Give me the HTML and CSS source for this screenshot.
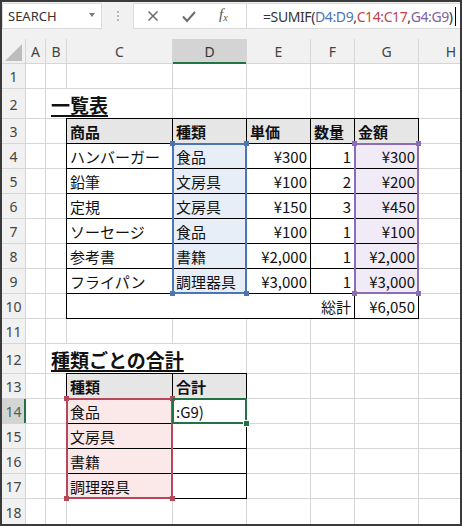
FILE: index.html
```html
<!DOCTYPE html>
<html lang="ja">
<head>
<meta charset="utf-8">
<title>SUMIF</title>
<link rel="stylesheet" href="styles.css">
</head>
<body>
<div class="frame">
  <div class="toolbar">
    <div class="namebox"><span class="nb-text">SEARCH</span><span class="nb-arrow"></span></div>
    <div class="grip"><i></i><i></i><i></i></div>
    <div class="fbar">
      <div class="fbtns">
        <svg class="ico-x" width="12" height="12" viewBox="0 0 12 12"><path d="M1.5 1.5 L10.5 10.5 M10.5 1.5 L1.5 10.5" stroke="#6b6b6b" stroke-width="1.5" fill="none"/></svg>
        <svg class="ico-ok" width="14" height="12" viewBox="0 0 14 12"><path d="M1 5.5 L5 10 L13 1" stroke="#6b6b6b" stroke-width="2" fill="none"/></svg>
        <span class="fx"><i>f</i><sub>x</sub></span>
      </div>
      <div class="ftext">=SUMIF(<span class="rb">D4:D9</span>,<span class="rr">C14:C17</span>,<span class="rp">G4:G9</span>)<span class="caret"></span></div>
    </div>
  </div>
  <div class="sheet">
    <div class="cells">
      <!-- header row -->
      <div class="h corner"><svg width="23" height="24" viewBox="0 0 23 24"><polygon points="3,22 20,22 20,5" fill="#bdbdbd"/></svg></div>
      <div class="h">A</div><div class="h">B</div><div class="h">C</div><div class="h sel">D</div><div class="h">E</div><div class="h">F</div><div class="h">G</div><div class="h">H</div>
      <!-- 1 -->
      <div class="rh">1</div><div class="c"></div><div class="c"></div><div class="c"></div><div class="c"></div><div class="c"></div><div class="c"></div><div class="c"></div><div class="c"></div>
      <!-- 2 -->
      <div class="rh">2</div><div class="c"></div><div class="c hd span2"><span>一覧表</span></div><div class="c"></div><div class="c"></div><div class="c"></div><div class="c"></div><div class="c"></div>
      <!-- 3 -->
      <div class="rh">3</div><div class="c"></div><div class="c"></div>
      <div class="c tb th">商品</div><div class="c tb th">種類</div><div class="c tb th">単価</div><div class="c tb th">数量</div><div class="c tb th">金額</div><div class="c"></div>
      <!-- 4 -->
      <div class="rh">4</div><div class="c"></div><div class="c"></div>
      <div class="c tb">ハンバーガー</div><div class="c tb fill-blue">食品</div><div class="c tb num">¥300</div><div class="c tb num">1</div><div class="c tb num fill-purple">¥300</div><div class="c"></div>
      <!-- 5 -->
      <div class="rh">5</div><div class="c"></div><div class="c"></div>
      <div class="c tb">鉛筆</div><div class="c tb fill-blue">文房具</div><div class="c tb num">¥100</div><div class="c tb num">2</div><div class="c tb num fill-purple">¥200</div><div class="c"></div>
      <!-- 6 -->
      <div class="rh">6</div><div class="c"></div><div class="c"></div>
      <div class="c tb">定規</div><div class="c tb fill-blue">文房具</div><div class="c tb num">¥150</div><div class="c tb num">3</div><div class="c tb num fill-purple">¥450</div><div class="c"></div>
      <!-- 7 -->
      <div class="rh">7</div><div class="c"></div><div class="c"></div>
      <div class="c tb">ソーセージ</div><div class="c tb fill-blue">食品</div><div class="c tb num">¥100</div><div class="c tb num">1</div><div class="c tb num fill-purple">¥100</div><div class="c"></div>
      <!-- 8 -->
      <div class="rh">8</div><div class="c"></div><div class="c"></div>
      <div class="c tb">参考書</div><div class="c tb fill-blue">書籍</div><div class="c tb num">¥2,000</div><div class="c tb num">1</div><div class="c tb num fill-purple">¥2,000</div><div class="c"></div>
      <!-- 9 -->
      <div class="rh">9</div><div class="c"></div><div class="c"></div>
      <div class="c tb">フライパン</div><div class="c tb fill-blue">調理器具</div><div class="c tb num">¥3,000</div><div class="c tb num">1</div><div class="c tb num fill-purple">¥3,000</div><div class="c"></div>
      <!-- 10 -->
      <div class="rh">10</div><div class="c"></div><div class="c"></div>
      <div class="c tb num span4">総計</div><div class="c tb num">¥6,050</div><div class="c"></div>
      <!-- 11 -->
      <div class="rh">11</div><div class="c"></div><div class="c"></div><div class="c"></div><div class="c"></div><div class="c"></div><div class="c"></div><div class="c"></div><div class="c"></div>
      <!-- 12 -->
      <div class="rh">12</div><div class="c"></div><div class="c hd span3"><span>種類ごとの合計</span></div><div class="c"></div><div class="c"></div><div class="c"></div><div class="c"></div>
      <!-- 13 -->
      <div class="rh">13</div><div class="c"></div><div class="c"></div>
      <div class="c tb th">種類</div><div class="c tb th">合計</div><div class="c"></div><div class="c"></div><div class="c"></div><div class="c"></div>
      <!-- 14 -->
      <div class="rh sel">14</div><div class="c"></div><div class="c"></div>
      <div class="c tb fill-red">食品</div><div class="c tb">:G9)</div><div class="c"></div><div class="c"></div><div class="c"></div><div class="c"></div>
      <!-- 15 -->
      <div class="rh">15</div><div class="c"></div><div class="c"></div>
      <div class="c tb fill-red">文房具</div><div class="c tb"></div><div class="c"></div><div class="c"></div><div class="c"></div><div class="c"></div>
      <!-- 16 -->
      <div class="rh">16</div><div class="c"></div><div class="c"></div>
      <div class="c tb fill-red">書籍</div><div class="c tb"></div><div class="c"></div><div class="c"></div><div class="c"></div><div class="c"></div>
      <!-- 17 -->
      <div class="rh">17</div><div class="c"></div><div class="c"></div>
      <div class="c tb fill-red">調理器具</div><div class="c tb"></div><div class="c"></div><div class="c"></div><div class="c"></div><div class="c"></div>
      <!-- 18 -->
      <div class="rh">18</div><div class="c"></div><div class="c"></div><div class="c"></div><div class="c"></div><div class="c"></div><div class="c"></div><div class="c"></div><div class="c"></div>
    </div>
    <div class="marks">
      <div class="range r-blue"><span class="hdl tl"></span><span class="hdl tr"></span><span class="hdl bl"></span><span class="hdl br"></span></div>
      <div class="range r-purple"><span class="hdl tl"></span><span class="hdl tr"></span><span class="hdl bl"></span><span class="hdl br"></span></div>
      <div class="range r-red"><span class="hdl tl"></span><span class="hdl tr"></span><span class="hdl bl"></span><span class="hdl br"></span></div>
      <div class="range active"><span class="hdl br"></span></div>
    </div>
  </div>
</div>
</body>
</html>
```

FILE: styles.css
```css
html, body {
  margin: 0;
  padding: 0;
  background: #fff;
}

.frame {
  --cols: 23px 19px 20px 105px 73px 63px 43px 63px 64px;
  --rows: 24px 24px 29px repeat(9, 24px) 29px repeat(5, 24px) 1fr;
  width: 462px;
  height: 526px;
  box-sizing: border-box;
  border: 2px solid #3a3a3a;
  background: #f1f1f1;
  display: flex;
  flex-direction: column;
  overflow: hidden;
  font-family: "Noto Sans CJK JP", "Noto Sans", sans-serif;
}

/* ---------- toolbar ---------- */
.toolbar {
  height: 37px;
  flex: none;
  box-sizing: border-box;
  padding-top: 1px;
  display: flex;
  align-items: flex-start;
}

.namebox {
  width: 100px;
  height: 26px;
  box-sizing: border-box;
  background: #fff;
  border: 1px solid #dadada;
  display: flex;
  align-items: center;
  justify-content: space-between;
  padding: 0 6px 0 5px;
}

.nb-text {
  font-family: "Noto Sans", sans-serif;
  font-size: 13px;
  color: #333;
  line-height: 1;
}

.nb-arrow {
  width: 0;
  height: 0;
  border-left: 3px solid transparent;
  border-right: 3px solid transparent;
  border-top: 4px solid #7a7a7a;
  margin-bottom: 2px;
}

.grip {
  width: 31px;
  height: 26px;
  display: flex;
  flex-direction: column;
  align-items: center;
  justify-content: center;
  gap: 2px;
}

.grip i {
  display: block;
  width: 2px;
  height: 2px;
  background: #b5b5b5;
}

.fbar {
  flex: 1;
  height: 26px;
  box-sizing: border-box;
  background: #fff;
  border: 1px solid #dadada;
  border-right: none;
  display: flex;
}

.fbtns {
  width: 112px;
  flex: none;
  display: flex;
  align-items: center;
}

.ico-x {
  margin-left: 13px;
}

.ico-ok {
  margin-left: 23px;
  margin-top: 2px;
}

.fx {
  margin-left: 23px;
  font-family: "Liberation Serif", serif;
  font-size: 15px;
  color: #555;
  line-height: 1;
  margin-top: -2px;
}

.fx sub {
  font-size: 10px;
  font-style: italic;
  vertical-align: -2px;
}

.ftext {
  flex: 1;
  border-left: 1px solid #dadada;
  padding-left: 16px;
  display: flex;
  align-items: center;
  font-family: "Noto Sans", sans-serif;
  font-size: 14px;
  letter-spacing: -0.4px;
  color: #333;
  white-space: nowrap;
}

.rb { color: #4a74b8; }
.rr { color: #c0434f; }
.rp { color: #7b62a8; }

.caret {
  display: inline-block;
  width: 1px;
  height: 19px;
  background: #000;
  margin-left: 2px;
}

/* ---------- sheet ---------- */
.sheet {
  flex: 1;
  display: grid;
  grid-template-columns: 1fr;
  grid-template-rows: 1fr;
  min-height: 0;
}

.cells,
.marks {
  grid-area: 1 / 1;
  display: grid;
  grid-template-columns: var(--cols);
  grid-template-rows: var(--rows);
  gap: 1px;
}

.cells {
  background: #d6d6d6;
}

.marks {
  position: relative;
}

.h,
.rh {
  background: #f1f1f1;
  color: #444;
  font-family: "Noto Sans", sans-serif;
  font-size: 14px;
  display: flex;
  align-items: center;
  justify-content: center;
  line-height: 1;
  padding-top: 2px;
  box-sizing: border-box;
}

.h.corner {
  padding: 0;
  display: block;
}

.h.corner svg {
  display: block;
}

.h.sel {
  background: #d4d4d4;
  color: #333;
  box-shadow: inset 0 -1px 0 #217346, 0 1px 0 #217346;
}

.rh.sel {
  background: #d4d4d4;
  color: #3d6b50;
  box-shadow: inset -1px 0 0 #217346, 1px 0 0 #217346;
}

.c {
  background: #fff;
  font-size: 15px;
  color: #111;
  display: flex;
  align-items: center;
  padding: 0 3px;
  white-space: nowrap;
  line-height: 1;
  min-width: 0;
}

.c.tb {
  box-shadow: 0 0 0 1px #000;
}

.c.th {
  background: #e7e6e6;
  font-weight: bold;
}

.c.num {
  justify-content: flex-end;
}

.span2 { grid-column: span 2; }
.span3 { grid-column: span 3; }
.span4 { grid-column: span 4; }

.c.hd {
  font-size: 19px;
  font-weight: bold;
  align-items: flex-end;
  padding-bottom: 4px;
  padding-left: 5px;
}

.c.hd span {
  text-decoration: underline;
  text-decoration-thickness: 1.5px;
  text-underline-offset: 2px;
}

.fill-blue { background: #e8eef8; }
.fill-purple { background: #f0ebf6; }
.fill-red { background: #fbe8e9; }

/* ---------- range marks ---------- */
.range {
  position: relative;
  margin: -1px;
  border: 2px solid;
  box-sizing: border-box;
}

.r-blue {
  grid-column: 5 / 6;
  grid-row: 5 / 11;
  border-color: #4a76b4;
  color: #4a76b4;
}

.r-purple {
  grid-column: 8 / 9;
  grid-row: 5 / 11;
  border-color: #8a6db5;
  color: #8a6db5;
}

.r-red {
  grid-column: 4 / 5;
  grid-row: 15 / 19;
  border-color: #b8475b;
  color: #b8475b;
}

.active {
  grid-column: 5 / 6;
  grid-row: 15 / 16;
  border-color: #217346;
  color: #217346;
}

.hdl {
  position: absolute;
  width: 5px;
  height: 5px;
  background: currentColor;
}

.hdl.tl { left: -4px; top: -4px; }
.hdl.tr { right: -4px; top: -4px; }
.hdl.bl { left: -4px; bottom: -4px; }
.hdl.br { right: -4px; bottom: -4px; }

.active .hdl.br {
  box-shadow: 0 0 0 1px #fff;
}
```
